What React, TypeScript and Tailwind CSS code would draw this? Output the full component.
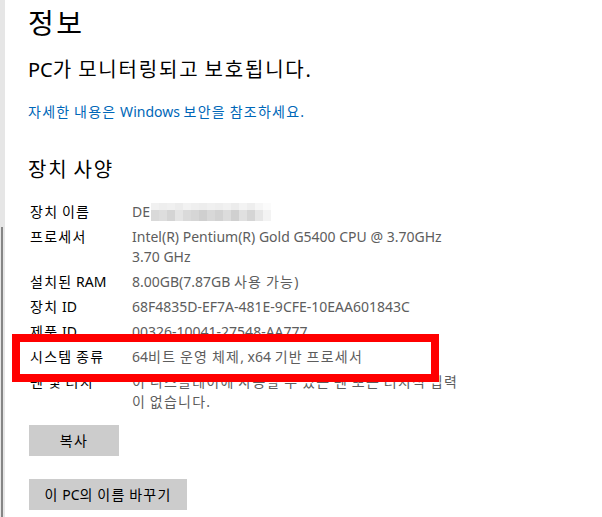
// Hangul runs get a little tracking so they take the width of the Windows font
function Kr({ text }: { text: string }) {
  const parts = text.split(/([\uAC00-\uD7A3]+)/);
  return (
    <>
      {parts.map((p, i) =>
        /[\uAC00-\uD7A3]/.test(p) ? (
          <span key={i} className="tracking-[0.09em]">
            {p}
          </span>
        ) : (
          p
        ),
      )}
    </>
  );
}

const specs: { label: string; lines: string[] }[] = [
  { label: '장치 이름', lines: [] },
  { label: '프로세서', lines: ['Intel(R) Pentium(R) Gold G5400 CPU @ 3.70GHz', '3.70 GHz'] },
  { label: '설치된 RAM', lines: ['8.00GB(7.87GB 사용 가능)'] },
  { label: '장치 ID', lines: ['68F4835D-EF7A-481E-9CFE-10EAA601843C'] },
  { label: '제품 ID', lines: ['00326-10041-27548-AA777'] },
  { label: '시스템 종류', lines: ['64비트 운영 체제, x64 기반 프로세서'] },
  { label: '펜 및 터치', lines: ['이 디스플레이에 사용할 수 있는 펜 또는 터치식 입력', '이 없습니다.'] },
];

// pixelated (blurred) device name
const topShades = ['#f1f1f1', '#eeeeee', '#f0f0f0', '#ececec', '#f2f2f2', '#efefef', '#ededed', '#f0f0f0', '#eeeeee', '#f1f1f1', '#ececec', '#f3f3f3', '#eeeeee', '#f6f6f6', '#fbfbfb'];
const bottomShades = ['#d9d9d9', '#dddddd', '#d4d4d4', '#e4e4e4', '#dadada', '#d6d6d6', '#cfcfcf', '#d8d8d8', '#d2d2d2', '#dcdcdc', '#d0d0d0', '#e0e0e0', '#d5d5d5', '#e6e6e6', '#f3f3f3'];

function DeviceName() {
  return (
    <span className="inline-flex items-center">
      DE
      <span className="ml-[1px] inline-flex flex-col">
        <span className="flex">
          {topShades.map((c, i) => (
            <span key={i} className="h-[7px] w-[8px]" style={{ backgroundColor: c }} />
          ))}
        </span>
        <span className="flex">
          {bottomShades.map((c, i) => (
            <span key={i} className="h-[11px] w-[8px]" style={{ backgroundColor: c }} />
          ))}
        </span>
      </span>
    </span>
  );
}

export default function App() {
  return (
    <div className="flex h-[517px] w-[602px] overflow-hidden bg-white font-['Noto_Sans','Noto_Sans_CJK_KR',sans-serif] text-black">
      {/* scroll strip */}
      <div className="flex w-[5px] flex-none flex-col bg-[#e6e6e6]">
        <div className="h-[227px] flex-none" />
        <div className="ml-[1px] w-[2px] flex-1 bg-[#858585]" />
      </div>

      <div className="relative flex-1 pl-[23px]">
        <h1 className="mt-[5px] text-[28px] leading-[36px]">
          <Kr text="정보" />
        </h1>
        <p className="mt-[15px] text-[20px] leading-[28px]">
          <Kr text="PC가 모니터링되고 보호됩니다." />
        </p>
        <p className="mt-[18px] text-[14px] leading-[20px] text-[#0067b8]">
          <Kr text="자세한 내용은 Windows 보안을 참조하세요." />
        </p>

        <h2 className="mt-[34px] text-[20px] leading-[28px]">
          <Kr text="장치 사양" />
        </h2>

        <div className="mt-[18px] flex flex-col gap-[5px] pl-[2px] text-[14px] leading-[20px]">
          {specs.map((row) => (
            <div key={row.label} className="flex">
              <div className="w-[102px] flex-none">
                <Kr text={row.label} />
              </div>
              <div className="text-[#5d5d5d]">
                {row.lines.length === 0 ? (
                  <DeviceName />
                ) : (
                  row.lines.map((l) => (
                    <div key={l}>
                      <Kr text={l} />
                    </div>
                  ))
                )}
              </div>
            </div>
          ))}
        </div>

        <div className="mt-[13px] flex flex-col items-start gap-[23px] pl-[1px]">
          <button className="h-[31px] w-[90px] bg-[#cccccc] text-[14px] text-black">
            <Kr text="복사" />
          </button>
          <button className="h-[31px] w-[158px] bg-[#cccccc] text-[14px] text-black">
            <Kr text="이 PC의 이름 바꾸기" />
          </button>
        </div>

        {/* annotation box */}
        <div className="absolute left-[7px] top-[334px] h-[48px] w-[427px] border-[8px] border-[#ff0000]" />
      </div>
    </div>
  );
}
